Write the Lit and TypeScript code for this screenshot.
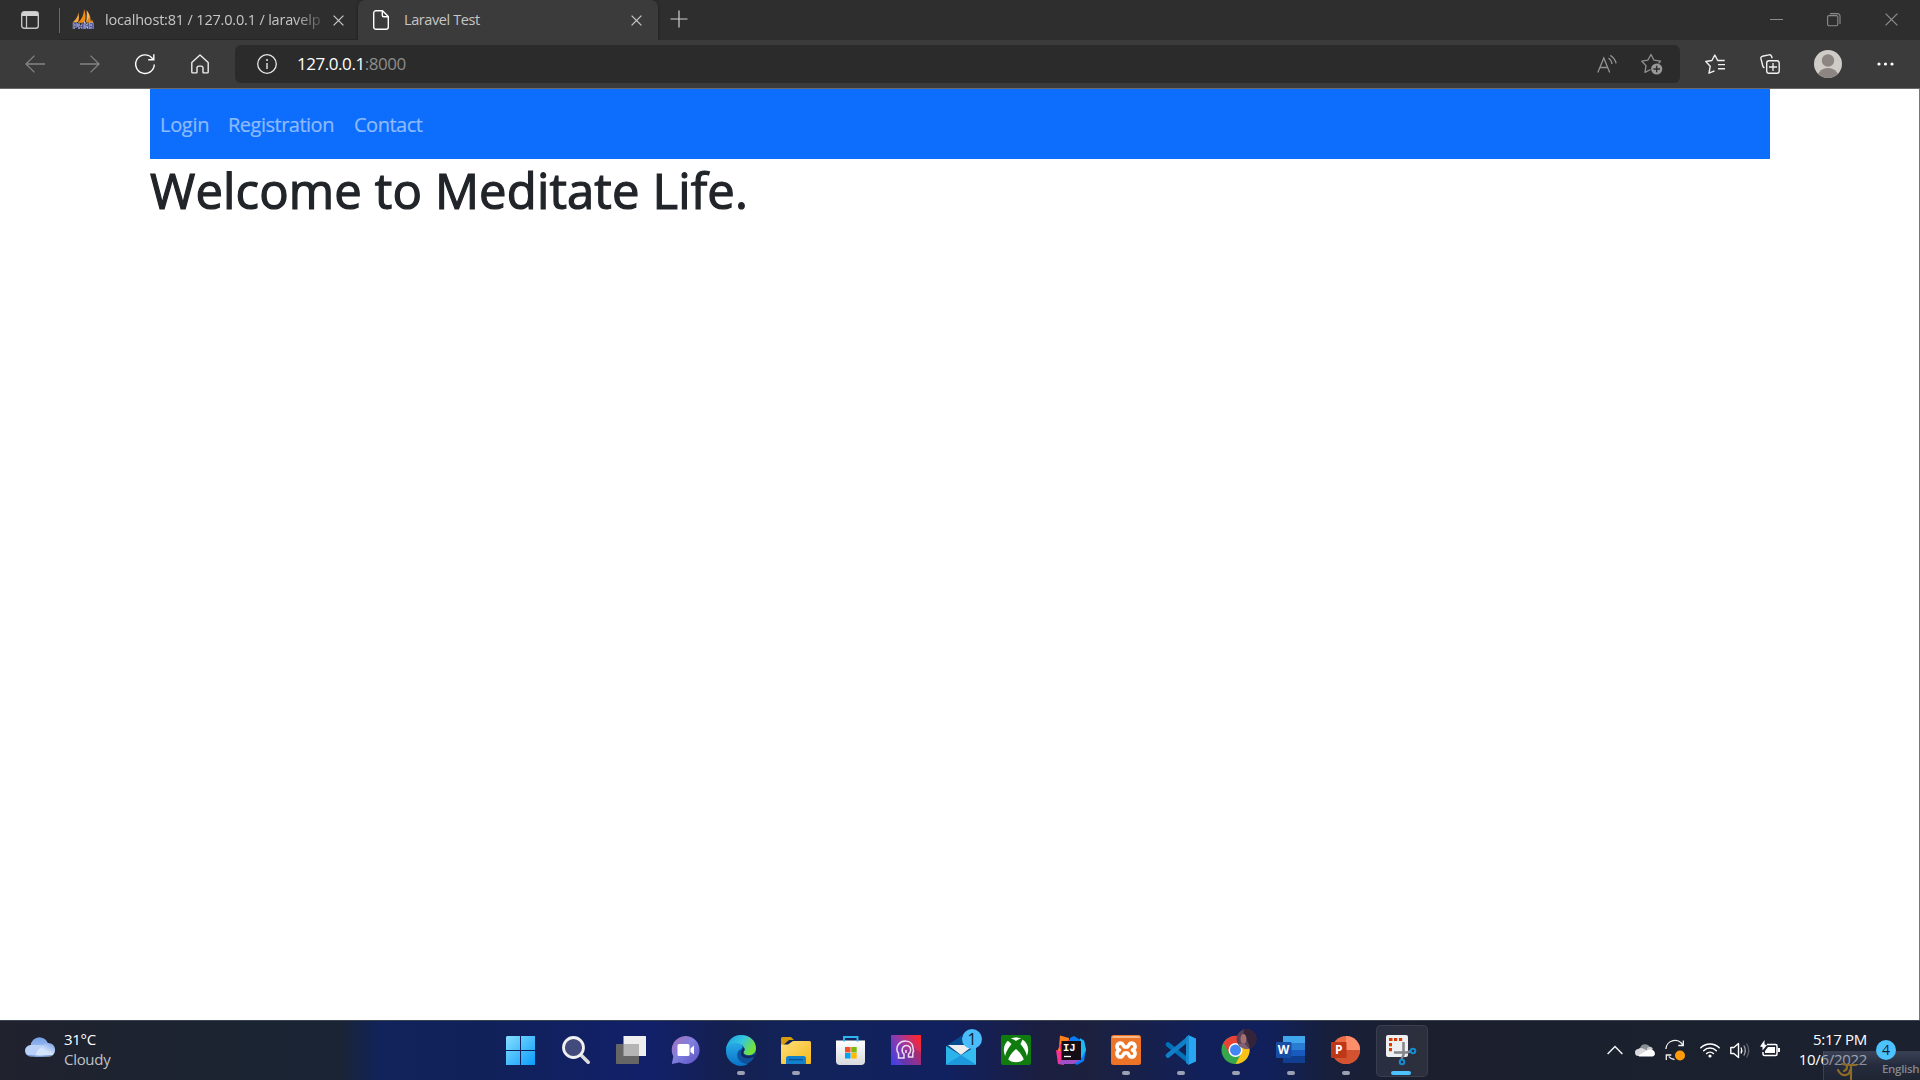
import { LitElement, html, css, svg, TemplateResult } from "lit";
import { customElement } from "lit/decorators.js";

const box = (w: number, h: number, body: TemplateResult) =>
  html`<svg class="ico" width=${w} height=${h} viewBox="0 0 ${w} ${h}" fill="none">${body}</svg>`;

const closeX = (s: number) => box(s, s, svg`<path d="M.6 .6 L${s - 0.6} ${s - 0.6} M${s - 0.6} .6 L.6 ${s - 0.6}" stroke="currentColor" stroke-width="1.3"/>`);

const chrome = {
  tabs: box(18, 18, svg`<rect x=".7" y=".7" width="16.6" height="16.6" rx="2.5" stroke="#c4c4c4" stroke-width="1.4"/><path d="M1 3a2 2 0 0 1 2-2h12a2 2 0 0 1 2 2v2H1z" fill="#d2d2d2"/><path d="M5.5 5v12" stroke="#c4c4c4" stroke-width="1.3"/>`),
  sails: box(21, 21, svg`<path d="M0 13C4 10 5 6 5.500 3q1 6-.2 10z" fill="#f7a63a"/><path d="M5 14C9 10 11 5 11 0q3 7 .4 13.600z" fill="#f58b0c"/><path d="M13 13.500C14 9 14 5 13.500 1q5 6 2.500 10z" fill="#f9b65c"/><path d="M13 13.500 17 7q1 4 .5 5l2-1 .5 3z" fill="#e08a1c"/><path d="M.8 20v-5.500h2.500q1.500 1.500 0 3H1M6 20v-5.500m0 3h3.500m0-3V20M12 20v-5.500l2 3 1.500-3V20M17 20v-5.500h2.500v3H17m2.500 0V20" stroke="#b9bde3" stroke-width="2"/><path d="M.8 20v-5.500h2.500q1.500 1.500 0 3H1M6 20v-5.500m0 3h3.500m0-3V20M12 20v-5.500l2 3 1.500-3V20M17 20v-5.500h2.500v3H17m2.500 0V20" stroke="#4b4f8c" stroke-width=".9"/>`),
  page: box(16, 20, svg`<path d="M3 .7h6.500l5.800 5.800V17a2.300 2.300 0 0 1-2.300 2.300H3A2.300 2.300 0 0 1 .7 17V3A2.300 2.300 0 0 1 3 .7zM9.300 1v4.200a1.500 1.500 0 0 0 1.500 1.500H15" stroke="#fff" stroke-width="1.4"/>`),
  plus: box(18, 18, svg`<path d="M9 .5v17M.5 9h17" stroke="#d0d0d0" stroke-width="1.2"/>`),
  min: box(13, 14, svg`<path d="M0 6.500h13" stroke="#8c8c8c"/>`),
  max: box(14, 14, svg`<rect x=".6" y="2.600" width="10.200" height="10.200" rx="1.500" stroke="#8c8c8c" stroke-width="1.100"/><path d="M3 .6h7.500a2.500 2.500 0 0 1 2.500 2.500V11" stroke="#8c8c8c" stroke-width="1.100"/>`),
  back: box(20, 18, svg`<path d="M20 9H1M9.500 .6 1 9l8.500 8.400" stroke="#858585" stroke-width="1.300"/>`),
  fwd: box(20, 18, svg`<path d="M0 9h19M10.500 .6 19 9l-8.500 8.400" stroke="#858585" stroke-width="1.300"/>`),
  reload: box(20, 20, svg`<path d="M19.300 10.500A9.300 9.300 0 1 1 17.400 4.500L18.500 5.700M18.800 .3v5.500h-5.600" stroke="#fff" stroke-width="1.400"/>`),
  home: box(20, 20, svg`<path d="M1.800 8.400 10 1l8.200 7.400V18a.9.9 0 0 1-.9.9h-3.600a.7.700 0 0 1-.7-.7v-4.300a1.800 1.800 0 0 0-1.800-1.800H8.800A1.800 1.800 0 0 0 7 13.900v4.300a.7.700 0 0 1-.7.700H2.700a.9.900 0 0 1-.9-.9z" stroke="#eee" stroke-width="1.400" stroke-linejoin="round"/>`),
  info: box(20, 20, svg`<circle cx="10" cy="10" r="9.300" stroke="#e6e6e6" stroke-width="1.300"/><path d="M10 9v6" stroke="#e6e6e6" stroke-width="1.400"/><circle cx="10" cy="6" r="1" fill="#e6e6e6"/>`),
  read: box(20, 18, svg`<path d="M.8 17.500 6.800 3l5.900 14.500M3 12.500h7.700M11.500 3q3 2 3.500 6M13.300.4q4.700 3 5.800 8" stroke="#929292" stroke-width="1.300"/>`),
  starPlus: box(22, 22, svg`<path d="M9.500 16.500 4 19.300l1-6.700L.8 8.200l6-1L10 1.500l3 5.700 6.500 1-2 2.200" stroke="#929292" stroke-width="1.300" stroke-linejoin="round"/><circle cx="15.700" cy="16" r="5.600" fill="#989898"/><path d="M15.700 12.700v6.600M12.400 16H19" stroke="#2b2b2b" stroke-width="1.300"/>`),
  favs: box(20, 20, svg`<path d="M9.500 16.800 4 19.200l1.200-6.900L.8 7.500l6.100-1L9.800 1l2.900 5.500h7M13 10.600h7M13 14.800h7" stroke="#f1f1f1" stroke-width="1.400" stroke-linejoin="round"/>`),
  collections: box(20, 20, svg`<path d="M4.500 13.800q-1.300-.3-1.700-1.800L.9 4.700q-.4-1.900 1.400-2.400L9 .9q1.900-.4 2.500 1.300l.7 2" stroke="#f1f1f1" stroke-width="1.400"/><rect x="6.700" y="6.700" width="12.500" height="12.500" rx="2.300" stroke="#f1f1f1" stroke-width="1.400"/><path d="M13 9v8M9 13h8" stroke="#f1f1f1" stroke-width="1.300"/>`),
  user: box(28, 28, svg`<clipPath id="uc"><circle cx="14" cy="14" r="14"/></clipPath><g clip-path="url(#uc)"><rect width="28" height="28" fill="#cfccc8"/><circle cx="14" cy="10.500" r="6.200" fill="#8c8582"/><ellipse cx="14" cy="26" rx="10" ry="8" fill="#8c8582"/></g>`),
  more: box(17, 4, svg`<g fill="#fff"><circle cx="2" cy="2" r="1.600"/><circle cx="8.500" cy="2" r="1.600"/><circle cx="15" cy="2" r="1.600"/></g>`),
};

interface App { art: TemplateResult; run?: boolean; active?: boolean }
const apps: App[] = [
  { art: svg`<linearGradient id="w1" x1="0" y1="0" x2="1" y2="1"><stop stop-color="#86dfff"/><stop offset="1" stop-color="#0a9cfb"/></linearGradient><path d="M1 1H14v14H0V2zM15 1h14v14H15zM0 16h14v14H0zM15 16h14v14H15z" fill="url(#w1)"/>` },
  { art: svg`<path d="m20 20 7.200 7.200" stroke="#dcdcdc" stroke-width="3.600" stroke-linecap="round"/><circle cx="12.500" cy="12.500" r="10" fill="#424b7c" stroke="#f1f1f1" stroke-width="2.800"/>` },
  { art: svg`<rect x="7.500" y="1" width="22.500" height="20" rx=".5" fill="#efefef"/><rect x="0" y="9" width="23" height="20" rx=".8" fill="#666"/><path d="M7.500 9H23v12H7.500z" fill="#b5b5b5"/>` },
  { art: svg`<linearGradient id="c1" x1="0" y1="0" x2="1" y2="1"><stop stop-color="#a86eb6"/><stop offset=".45" stop-color="#8180df"/><stop offset="1" stop-color="#5a4fc4"/></linearGradient><path d="M15 1a14 14 0 1 1-6.500 26.600L.8 29l1.500-7.500A14 14 0 0 1 15 1z" fill="url(#c1)"/><rect x="6.500" y="9" width="12" height="12" rx="1.500" fill="#fff"/><path d="m19.500 13.500 3.500-3v9L19.500 17z" fill="#fff"/>` },
  { run: true, art: svg`<linearGradient id="e1" x1="0" y1="0" x2="1" y2=".45"><stop stop-color="#1b9de0"/><stop offset=".55" stop-color="#35c6df"/><stop offset="1" stop-color="#73e33b"/></linearGradient><linearGradient id="e2" x1="0" y1="0" x2="0" y2="1"><stop stop-color="#2aaee8"/><stop offset="1" stop-color="#0873c9"/></linearGradient><circle cx="15" cy="15" r="15" fill="#10519c"/><path d="M0 15C1 6 9 4 14 8c3 2 3 5 1 6-5 6-1 13 7 15A15 15 0 0 1 0 15z" fill="url(#e2)"/><path d="M0 14.500C1 6 7 0 15 0c9 0 15 6 15 13 0 5-4 8-9 7-3-.5-4-2-3-3.500C20 13 16 8 10 8 5 8 1 11 0 14.500z" fill="url(#e1)"/><path d="M18 12.500c1.500 2-.2 4-.8 4.500-.4 2.500 4 5.500 11.300 2.500l1.500 2-4 3c-2 .8-4 1-6 .500-6-1-6.500-9-2-12.500z" fill="#122861"/><path d="M28.200 21.500A15 15 0 0 1 21 29C9 27 10 17 14 14.500c-1 8 7 11 14.200 7z" fill="#10519c"/>` },
  { run: true, art: svg`<linearGradient id="f1" x1="0" y1="0" x2="1" y2="1"><stop stop-color="#ffdf79"/><stop offset="1" stop-color="#f5b91d"/></linearGradient><path d="M0 3.500Q0 2 1.500 2H10l3 3H8L0 12z" fill="#d89b0c"/><path d="M0 9.500h7L12 6h16.500Q30 6 30 7.500V28q0 1-1 1H1q-1 0-1-1z" fill="url(#f1)"/><path d="M5 29v-5.500Q5 21 7.500 21h15q2.500 0 2.500 2.500V29z" fill="#1380cd"/><path d="M8 24.700h14" stroke="#084e91" stroke-width="1.200"/>` },
  { art: svg`<linearGradient id="s1" x1="0" y1="0" x2="0" y2="1"><stop stop-color="#fff"/><stop offset="1" stop-color="#d9dade"/></linearGradient><path d="M0 5.500h29V26q0 4-4 4H4q-4 0-4-4z" fill="url(#s1)"/><path d="M8 6.500V2h13.500v4.500" stroke="#30b6ee" stroke-width="1.900"/><path d="M9 12h5.500v5.500H9z" fill="#f25022"/><path d="M15.200 12h5.500v5.500h-5.500z" fill="#80b80a"/><path d="M9 18h5.500v5.500H9z" fill="#02a4ef"/><path d="M15.200 18h5.500v5.500h-5.500z" fill="#ffb902"/>` },
  { art: svg`<linearGradient id="p1" x1="0" y1=".8" x2="1" y2=".2"><stop stop-color="#4440df"/><stop offset=".5" stop-color="#9a38a4"/><stop offset="1" stop-color="#fc2630"/></linearGradient><path d="M0 0h30v30H0z" fill="url(#p1)"/><path d="m7 24 6 6h17V18l-8-6z" fill="#372076" opacity=".22"/><path d="M11.500 23H7.500v-4.500C5.300 16 5.300 12 7.500 9.300 11 5 18.500 5 21.200 9.700c1 2.300.6 4.300 1.500 6.300l-.9 1.500V22h-4.300v-3c2.700-2 3-6 .5-7.700-2.500-1.700-6-.5-6.700 2.300-.5 2.300.2 4.400 1.700 5.600V23z" stroke="#eadff2" stroke-width="1.500"/><path d="M15 18v-3" stroke="#eadff2" stroke-width="1.500"/>` },
  { art: svg`<path d="m0 11 15-10 15 10-15 9z" fill="#064a8f"/><path d="m2 10 26 0-13 10z" fill="#ededed"/><path d="m0 11 30 18.500H0z" fill="#2cb4ea"/><path d="M30 11v18.500H0z" fill="#35bcf0"/><path d="m0 29.500 15-9.500 15 9.500z" fill="#1d98df"/><circle cx="26" cy="4" r="10" fill="#49bdfb"/><text x="26" y="10" text-anchor="middle" class="badge">1</text>` },
  { art: svg`<rect width="30" height="30" rx="2" fill="#107c10"/><circle cx="15" cy="15" r="12.200" fill="#fff"/><path d="M8 3.500q4-.5 7 2.500 3-3 7-2.500L19.500 9Q26 17 26 23l-3 2q-2-6-8-11-6 5-8 11l-3-2q0-6 6.500-14-2.500-2.700-4.500-3.500z" fill="#107c10"/><path d="M10 3.400Q12.500 3.600 15 5.100q2.500-1.500 5-1.700-5-2-10 0z" fill="#fff"/>` },
  { art: svg`<path d="M4 .5 13 3v13L1 17 3 12z" fill="#fc801d"/><path d="m3 10 12-6v15L6 20z" fill="#fe315d"/><path d="m0 15 8 2v13l-6-1z" fill="#ff318c"/><path d="m14 3 4-2 5 3 5 1 2 10-2 11-7 4-8-5z" fill="#087cfa"/><path d="m24 3 4 3 2 9-5 9z" fill="#22b7f3"/><path d="M2 29h16l6-4H5z" fill="#a14ec7"/><path d="M5.500 6H25v19H5.500z" fill="#150d16"/><text x="7" y="15.500" class="ij">IJ</text><path d="M8 21.500h7" stroke="#fff" stroke-width="1.300"/>` },
  { run: true, art: svg`<rect width="30" height="30" rx="2.500" fill="#ec7428"/><path d="M1 3q0-2 2-2h24q2 0 2 2z" fill="#f8b88c"/><path d="M11 8.500c-5-2-7 5-2.500 6.500-4.500 1.500-2.500 9 2.500 6.500l2.500-3.500h3l2.500 3.500c5 2.500 7-5 2.500-6.500 4.500-1.500 2.500-8.500-2.500-6.500L16.500 12h-3z" stroke="#fff" stroke-width="3.700" stroke-linejoin="round"/>` },
  { run: true, art: svg`<path d="M2 9.500 22 25.500" stroke="#0072b9" stroke-width="4.800" stroke-linecap="round"/><path d="M2 20.500 22 4" stroke="#117fc7" stroke-width="4.800" stroke-linecap="round"/><path d="M22 0 30 3.500v23L22 30z" fill="#29a5f1"/><path d="m20 2 3-2v30l-3-2z" fill="#1689cf"/>` },
  { run: true, art: svg`<circle cx="14.500" cy="15" r="14" fill="#36a84b"/><path d="M2.400 8A14 14 0 0 1 28.500 13l-14-4-6 10z" fill="#e94235"/><path d="M14.500 9h12.800A14 14 0 0 1 14.500 29l6-11z" fill="#fbc117"/><circle cx="14.500" cy="15" r="7" fill="#fff"/><circle cx="14.500" cy="15" r="5.500" fill="#4286f5"/><circle cx="25.500" cy="4" r="10" fill="#5a4358"/><path d="M23-5.700A10 10 0 0 1 34.500 8.500q-2 4-6 5Q28 5 22 2z" fill="#33243a"/><ellipse cx="22.500" cy="4" rx="3" ry="5" fill="#a4706f"/><path d="m17 9 6-1 5 5.700q-6 1.300-11-4.700z" fill="#80616f"/>` },
  { run: true, art: svg`<path d="M7 1h22v7H7z" fill="#41a5ee"/><path d="M7 8h22v7H7z" fill="#2b7cd3"/><path d="M7 15h22v6.500H7z" fill="#185abd"/><path d="M7 21.500h22V28H7z" fill="#103f91"/><rect x="0" y="7" width="15.500" height="16" rx="1" fill="#164da5"/><text x="7.500" y="19" text-anchor="middle" class="office">W</text>` },
  { run: true, art: svg`<circle cx="15" cy="15" r="14" fill="#ed6c47"/><path d="M15 1a14 14 0 0 1 14 14H15z" fill="#ff8f6b"/><path d="M1 15h28a14 14 0 0 1-28 0z" fill="#d35230"/><rect x="0" y="7" width="15.500" height="16" rx="1" fill="#bd3719"/><text x="7.700" y="19" text-anchor="middle" class="office">P</text>` },
  { run: true, active: true, art: svg`<rect x="0" y="0" width="22" height="22" rx="2" fill="#eeeff1"/><path d="M3 3h3.500v3H3zM8 3h3.200v3H8zM13 3h3.200v3H13zM3 8h3v3.200H3zM3 13h3v3.200H3z" fill="#d83b01"/><path d="M17.500 7v13l-2 4M8 17.500h13l4-1.500" stroke="#828589" stroke-width="2.500"/><circle cx="16" cy="27" r="2.300" stroke="#168bd0" stroke-width="2"/><circle cx="27" cy="16" r="2.300" stroke="#168bd0" stroke-width="2"/>` },
];

const tray = {
  cloud: html`<svg class="weather" width="30" height="20" viewBox="0 0 30 20"><defs><linearGradient id="cl" x1="0" y1="0" x2="0" y2="1"><stop stop-color="#749fe5"/><stop offset="1" stop-color="#b8d0fa"/></linearGradient><linearGradient id="cr" x1="1" y1="0" x2=".2" y2="1"><stop stop-color="#719ce4"/><stop offset=".6" stop-color="#d5e4fc"/></linearGradient></defs><circle cx="14.500" cy="9" r="8.800" fill="url(#cl)"/><rect y="8" width="23" height="11.500" rx="5.700" fill="#b9d0f8"/><path d="M10 19.500q2-7 7-10 4-5 9-3c5 2 5 9 2 11.500q-1.500 1.500-5 1.500z" fill="url(#cr)"/><path d="M3 18.500q12 1.500 24 0" stroke="#6e99df" fill="none"/></svg>`,
  chevron: box(16, 10, svg`<path d="m.6 9 7.400-7.500L15.400 9" stroke="#f2f2f2" stroke-width="1.500"/>`),
  onedrive: box(20, 14, svg`<path d="M5 5a5.500 5.500 0 0 1 10-1l-4 6-8-4z" fill="#8a8d93"/><path d="M12 5q4-3 6 1l-6 3z" fill="#c9cacc"/><path d="M3.500 6Q6 4 9 6l8 3.500-7 3.500H3.500a3.500 3.500 0 0 1 0-7z" fill="#d9dadb"/><path d="m4 12 9-5q3.500-2 6 1c2 3 .5 5.500-2 5.500H4z" fill="#fff"/>`),
  sync: box(20, 21, svg`<path d="M.9 9A9 9 0 0 1 18 5.500M18.300.5v5h-5M3.800 16.500Q5.500 19 9.500 19.500M1.300 20v-5h5" stroke="#f2f2f2" stroke-width="1.300"/><circle cx="15" cy="15.500" r="5" fill="#ff9b0a"/>`),
  wifi: box(20, 16, svg`<path d="M.8 5.700a13 13 0 0 1 18.400 0M3.700 8.700a8.900 8.900 0 0 1 12.600 0M6.600 11.500a4.900 4.900 0 0 1 6.800 0" stroke="#fff" stroke-width="1.500" stroke-linecap="round"/><circle cx="10" cy="14" r="1.600" fill="#fff"/>`),
  volume: box(21, 17, svg`<path d="M.8 5.500h3L8.500 1.500v14L3.800 11.500h-3z" stroke="#fff" stroke-width="1.400" stroke-linejoin="round"/><path d="M11 5.500q1.600 3 0 6" stroke="#fff" stroke-width="1.300"/><path d="M13.800 3.500q3 5 0 10" stroke="#a0a3a9" stroke-width="1.300"/><path d="M16.500 1.500q4.500 7 0 14" stroke="#5d6068" stroke-width="1.300"/>`),
  battery: box(21, 17, svg`<path d="M7 4.500h8.500Q17 4.500 17 6v8q0 1.500-1.500 1.500h-11Q3 15.500 3 14v-2" stroke="#fff" stroke-width="1.500"/><path d="M8 7h7v6H5v-2zM18 8h2v4h-2z" fill="#fff"/><path d="M4.500 0v4.500L7 5 2.500 10.500V7L0 6.500z" fill="#fff"/>`),
};

@customElement("app-root")
export class AppRoot extends LitElement {
  static styles = css`
    :host { display: flex; flex-direction: column; width: 1920px; height: 1080px; overflow: hidden; background: #fff; font-family: "Open Sans", "Noto Sans", sans-serif; }
    * { box-sizing: border-box; }
    .ico { display: block; flex: none; overflow: visible; }
    .strip { display: flex; height: 40px; background: #2e2e2e; color: #c6c6c6; font-size: 14.500px; line-height: 38px; flex: none; }
    .lead { width: 60px; display: flex; align-items: center; padding: 0 0 0 21px; }
    .rule { width: 1px; height: 25px; margin: 8px 0 0 -1px; background: #696969; }
    .tab { display: flex; align-items: center; }
    .tab.first { width: 298px; padding-left: 13px; border-bottom: 1px solid #262626; }
    .tab.first .name { width: 217px; margin-left: 11px; white-space: nowrap; letter-spacing: -.18px; -webkit-mask-image: linear-gradient(90deg, #000 190px, #0003 217px); }
    .tab.first .x { margin: 2px 0 0 11px; }
    .tab.current { width: 300px; background: #3b3b3b; border-radius: 7px 7px 0 0; padding-left: 15px; box-shadow: 0 0 3px #1b1b1b; }
    .tab.current .name { width: 227px; margin-left: 15px; letter-spacing: -.4px; }
    .add { margin: 10px 0 0 12px; }
    .win { margin-left: auto; display: flex; gap: 44px; padding: 13px 22px 0 0; color: #8c8c8c; }
    .bar { height: 49px; display: flex; align-items: center; background: #3b3b3b; border-bottom: 1px solid #6c6a68; padding: 0 26px 0 25px; flex: none; position: relative; }
    .navs { display: flex; gap: 35px; align-items: center; width: 210px; }
    .address { width: 1445px; height: 38px; border-radius: 6px; background: #2b2b2b; display: flex; align-items: center; padding: 0 17px 0 22px; }
    .url { margin-left: 20px; font-size: 17px; color: #fff; letter-spacing: -.45px; line-height: 36px; }
    .url span { color: #8d8d8d; }
    .address .right { margin-left: auto; display: flex; gap: 24px; align-items: center; }
    .tools { margin-left: auto; display: flex; align-items: center; }
    .favs { margin-right: 35px; } .coll { margin-right: 34px; } .user { margin-right: 35px; }
    .page { flex: 1; border-right: 1px solid #777; padding: 0 149px 0 150px; }
    .menu { height: 70px; background: #0d6efd; display: flex; align-items: center; gap: 20px; padding: 0 10px; font-size: 20px; color: #8dbbfe; -webkit-text-stroke: .2px #8dbbfe; }
    .menu a:nth-child(1) { width: 48px; letter-spacing: -.3px; }
    .menu a:nth-child(2) { width: 106px; letter-spacing: -.5px; }
    .menu a:nth-child(3) { letter-spacing: -.5px; }
    h1 { margin: 1px 0 0; font-weight: 500; font-size: 49px; line-height: 60px; color: #212529; letter-spacing: .14px; white-space: nowrap; -webkit-text-stroke: 1.200px #212529; }
    .task { height: 60px; flex: none; display: flex; position: relative; border-top: 1px solid #3a444e; background: linear-gradient(90deg, #20222e 0, #1b2432 250px, #1a2435 340px, #11235a 380px, #10215a 490px, #12206a 650px, #14204f 730px, #12235a 790px, #11205f 950px, #1b1e40 1040px, #1c213e 1090px, #12205a 1200px, #11205a 1270px, #171f3b 1330px, #1c202e 1420px, #1b212e 1920px); color: #fff; }
    .forecast { width: 493px; display: flex; padding: 8px 0 0 25px; gap: 9px; font-size: 15px; line-height: 20px; letter-spacing: -.3px; }
    .forecast .weather { margin-top: 8px; }
    .forecast small { display: block; font-size: inherit; color: #bfc1c5; }
    .slot { width: 55px; height: 59px; padding: 14px 0 0 13px; position: relative; }
    .slot .ico { position: relative; }
    .slot.active::before { content: ""; position: absolute; left: 3px; top: 4px; width: 50px; height: 50px; border-radius: 5px; background: #ffffff12; border: 1px solid #ffffff14; }
    .slot.run::after { content: ""; position: absolute; bottom: 5px; left: 24px; width: 8px; height: 4px; border-radius: 2px; background: #9ba0b2; }
    .slot.active::after { left: 18px; width: 20px; background: #4cc2ff; }
    .badge { font: 16px "Open Sans", sans-serif; fill: #102030; }
    .ij { font: bold 10.500px "Liberation Mono", monospace; fill: #fff; }
    .office { font: bold 12px "Open Sans", sans-serif; fill: #fff; }
    .tray { display: flex; margin-left: 179px; padding-top: 21px; }
    .tray .a { margin: 3px 12px 0 0; } .tray .b { margin: 1px 10px 0 0; } .tray .c { margin: -2px 15px 0 0; } .tray .d { margin: 0 10px 0 0; } .tray .e { margin: 0 9px 0 0; } .tray .f { margin: -2px 0 0; }
    .clock { width: 86px; text-align: right; font-size: 15px; line-height: 20px; letter-spacing: -.3px; padding-top: 8px; }
    .count { position: relative; width: 20px; height: 20px; border-radius: 50%; background: #4cc2ff; color: #142233; font-size: 14px; line-height: 20px; text-align: center; margin: 19px 0 0 9px; }
    .lang { position: absolute; left: 1823px; top: 30px; width: 97px; height: 30px; overflow: hidden; background: linear-gradient(#59617b80, #2c344a90 45%, #22283570); border: solid #60688066; border-width: 1px 0 0 1px; color: #85878c; font-size: 11.500px; font-weight: 600; line-height: 34px; letter-spacing: -.3px; display: flex; padding-left: 13px; }
    .lang .ico { margin: 9px 25px 0 0; }
  `;

  render() {
    return html`
      <div class="strip">
        <div class="lead">${chrome.tabs}</div><div class="rule"></div>
        <div class="tab first">${chrome.sails}<span class="name">localhost:81 / 127.0.0.1 / laravelp</span><span class="x">${closeX(11)}</span></div>
        <div class="tab current">${chrome.page}<span class="name">Laravel Test</span><span class="x">${closeX(11)}</span></div>
        <div class="add">${chrome.plus}</div>
        <div class="win">${chrome.min}${chrome.max}${closeX(13)}</div>
      </div>
      <div class="bar">
        <div class="navs">${chrome.back}${chrome.fwd}${chrome.reload}${chrome.home}</div>
        <div class="address">${chrome.info}<div class="url">127.0.0.1<span>:8000</span></div><div class="right">${chrome.read}${chrome.starPlus}</div></div>
        <div class="tools"><div class="favs">${chrome.favs}</div><div class="coll">${chrome.collections}</div><div class="user">${chrome.user}</div>${chrome.more}</div>
      </div>
      <main class="page">
        <nav class="menu"><a>Login</a><a>Registration</a><a>Contact</a></nav>
        <h1>Welcome to Meditate Life.</h1>
      </main>
      <footer class="task">
        <div class="forecast">${tray.cloud}<div>31°C<small>Cloudy</small></div></div>
        ${apps.map((a) => html`<div class="slot ${a.run ? "run" : ""} ${a.active ? "active" : ""}">${box(30, 30, a.art)}</div>`)}
        <div class="tray"><div class="a">${tray.chevron}</div><div class="b">${tray.onedrive}</div><div class="c">${tray.sync}</div><div class="d">${tray.wifi}</div><div class="e">${tray.volume}</div><div class="f">${tray.battery}</div></div>
        <div class="clock">5:17 PM<br />10/6/2022</div>
        <div class="lang">${box(20, 20, svg`<path d="M5 3q5 0 5 3t-3 4M1 9q3 6 8 5 4-1 4-5M11 4h8M14 4v14" stroke="#8d6b27" stroke-width="2.200" stroke-linecap="round"/>`)}<span>English</span></div>
        <div class="count">4</div>
      </footer>`;
  }
}
